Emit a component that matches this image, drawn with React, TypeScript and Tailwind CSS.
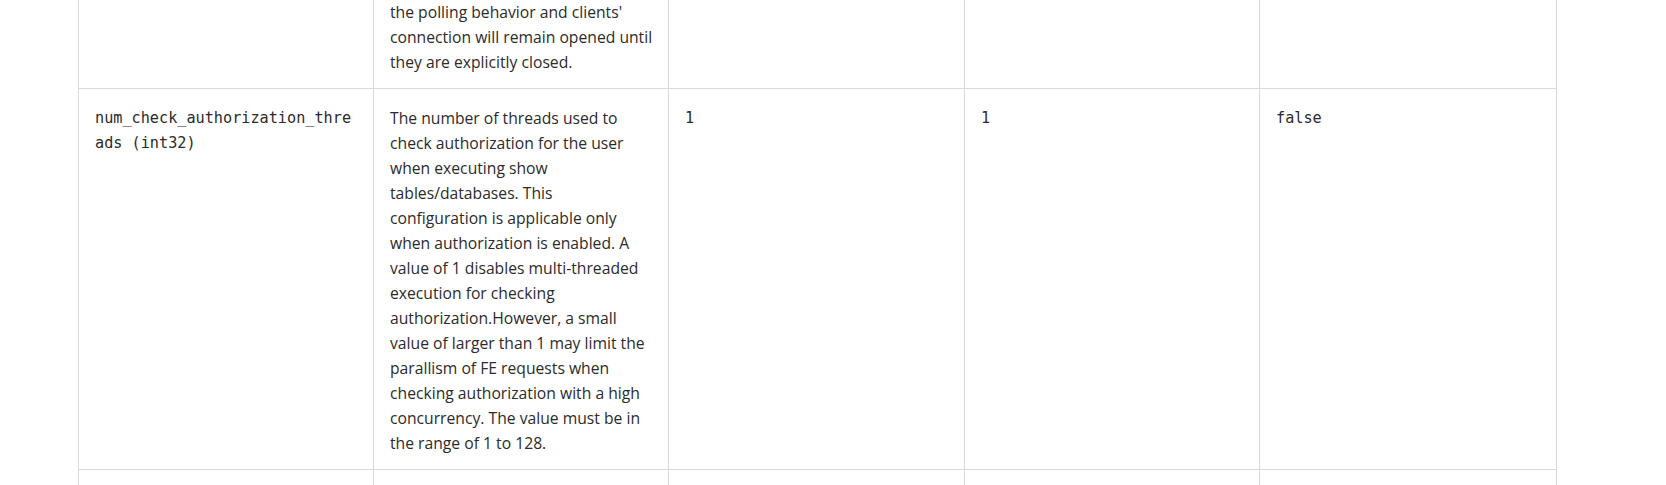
import React from "react";

const cellBase =
  "border border-[#dadada] px-4 pt-[16.5px] pb-[13.5px] align-top leading-[25px] text-[#2b2b2b]";
const mono = "font-['DejaVu_Sans_Mono',monospace] text-[15.2px]";
const sans = "font-['Open_Sans',sans-serif] text-[15.7px]";

function Lines({ lines }: { lines: string[] }) {
  return (
    <>
      {lines.map((l, i) => (
        <span key={i} className="block whitespace-nowrap">
          {l}
        </span>
      ))}
    </>
  );
}

export default function App() {
  return (
    <div className="h-[485px] w-[1666px] overflow-hidden bg-white">
      <table className="ml-[78px] mt-[-18px] w-[1478px] table-fixed border-collapse">
        <colgroup>
          <col className="w-[295px]" />
          <col className="w-[295px]" />
          <col className="w-[296px]" />
          <col className="w-[295px]" />
          <col className="w-[297px]" />
        </colgroup>
        <tbody>
          <tr>
            <td className={cellBase}></td>
            <td className={`${cellBase} ${sans}`}>
              <Lines
                lines={[
                  "the polling behavior and clients'",
                  "connection will remain opened until",
                  "they are explicitly closed.",
                ]}
              />
            </td>
            <td className={cellBase}></td>
            <td className={cellBase}></td>
            <td className={cellBase}></td>
          </tr>
          <tr>
            <td className={`${cellBase} ${mono}`}>
              <Lines lines={["num_check_authorization_thre", "ads (int32)"]} />
            </td>
            <td className={`${cellBase} ${sans}`}>
              <Lines
                lines={[
                  "The number of threads used to",
                  "check authorization for the user",
                  "when executing show",
                  "tables/databases. This",
                  "configuration is applicable only",
                  "when authorization is enabled. A",
                  "value of 1 disables multi-threaded",
                  "execution for checking",
                  "authorization.However, a small",
                  "value of larger than 1 may limit the",
                  "parallism of FE requests when",
                  "checking authorization with a high",
                  "concurrency. The value must be in",
                  "the range of 1 to 128.",
                ]}
              />
            </td>
            <td className={`${cellBase} ${mono}`}>1</td>
            <td className={`${cellBase} ${mono}`}>1</td>
            <td className={`${cellBase} ${mono}`}>false</td>
          </tr>
          <tr>
            <td className={`${cellBase} h-[120px]`}></td>
            <td className={cellBase}></td>
            <td className={cellBase}></td>
            <td className={cellBase}></td>
            <td className={cellBase}></td>
          </tr>
        </tbody>
      </table>
    </div>
  );
}
